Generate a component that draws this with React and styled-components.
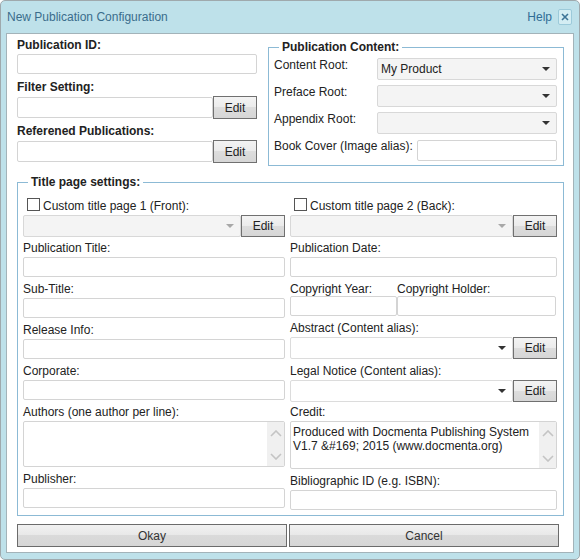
import React from 'react';
import styled, { createGlobalStyle } from 'styled-components';

const GlobalStyle = createGlobalStyle`
  html, body { margin: 0; padding: 0; background: #fff; }
  body { font-family: "Liberation Sans", Arial, sans-serif; font-size: 12px; color: #222; }
  * { box-sizing: border-box; }
`;

const FONT = `12px "Liberation Sans", Arial, sans-serif`;

const Window = styled.div`
  width: 580px;
  height: 560px;
  border: 1px solid #9fa9ad;
  border-radius: 5px;
  background: #bee1ea;
  display: flex;
  flex-direction: column;
`;

const TitleBar = styled.div`
  height: 32px;
  flex: none;
  display: flex;
  align-items: center;
  padding: 0 7px 0 6px;
  color: #3a6d8c;
`;

const Title = styled.div`
  flex: 1;
  line-height: 14px;
`;

const HelpLink = styled.span`
  color: #2f6d96;
  margin-right: 6px;
`;

const CloseButton = styled.div`
  width: 14px;
  height: 16px;
  border: 1px solid #9ccada;
  border-radius: 2px;
  background: #d4edf3;
  display: flex;
  align-items: center;
  justify-content: center;
`;

const Content = styled.div`
  flex: 1;
  margin: 0 5px 6px 5px;
  background: #fff;
  border: 1px solid #a3b3b9;
  padding: 0 9px 0 10px;
  display: flex;
  flex-direction: column;
`;

const TopSection = styled.div`
  display: flex;
  align-items: flex-start;
  gap: 11px;
  padding-top: 4px;
`;

const LeftCol = styled.div`
  width: 240px;
  flex: none;
  display: flex;
  flex-direction: column;
`;

const BoldLabel = styled.div`
  font-weight: bold;
  line-height: 14px;
  height: 14px;
  margin-top: ${p => p.$mt || 0}px;
  margin-bottom: 2px;
  white-space: nowrap;
`;

const TextInput = styled.input`
  display: block;
  flex: ${p => (p.$grow ? '1 1 auto' : 'none')};
  width: ${p => (p.$w ? `${p.$w}px` : '100%')};
  min-width: 0;
  height: ${p => p.$h || 20}px;
  margin: 0;
  margin-top: ${p => p.$mt || 0}px;
  border: 1px solid #d4d4d4;
  border-radius: 2px;
  padding: 0 3px;
  font: ${FONT};
  background: #fff;
  outline: none;
`;

const InputRow = styled.div`
  display: flex;
  align-items: center;
  height: ${p => p.$h || 23}px;
  flex: none;
`;

const EditButton = styled.button`
  flex: none;
  width: 44px;
  height: ${p => p.$h || 23}px;
  margin: 0;
  padding: 0;
  border: 1px solid #707070;
  border-radius: 0;
  background: linear-gradient(#f3f3f3, #ebebeb 50%, #dddddd 50%, #d6d6d6);
  font: ${FONT};
  color: #222;
`;

const Fieldset = styled.fieldset`
  margin: 0;
  margin-top: ${p => p.$mt || 0}px;
  width: ${p => p.$w}px;
  flex: none;
  min-width: 0;
  border: 1px solid #8cbad5;
  padding: ${p => p.$pad};
`;

const Legend = styled.legend`
  font-weight: bold;
  line-height: 14px;
  padding: 0 3px;
  margin-left: 5px;
`;

const CRow = styled.div`
  display: flex;
  align-items: flex-start;
  height: 22px;
  & + & { margin-top: 5px; }
`;

const CLabel = styled.div`
  flex: none;
  width: ${p => p.$w}px;
  line-height: 14px;
  white-space: nowrap;
`;

const SelectBox = styled.div`
  flex: ${p => (p.$w ? 'none' : '1 1 auto')};
  width: ${p => (p.$w ? `${p.$w}px` : 'auto')};
  min-width: 0;
  height: 22px;
  border: 1px solid ${p => (p.$white ? '#dcdcdc' : '#d8d8d8')};
  border-radius: 2px;
  background: ${p => (p.$white ? '#fff' : '#f4f4f4')};
  display: flex;
  align-items: center;
  padding-left: 3px;
  color: #222;
`;

const SelectText = styled.span`
  flex: 1;
  line-height: 14px;
  white-space: nowrap;
`;

const Arrow = styled.span`
  flex: none;
  width: 0;
  height: 0;
  margin-right: 6px;
  border-left: 4px solid transparent;
  border-right: 4px solid transparent;
  border-top: 4px solid ${p => (p.$dim ? '#a8a8a8' : '#333')};
`;

const Columns = styled.div`
  display: grid;
  grid-template-columns: 262px 267px;
  column-gap: 5px;
  align-items: start;
`;

const Col = styled.div`
  display: flex;
  flex-direction: column;
`;

const CheckRow = styled.label`
  display: flex;
  align-items: flex-start;
  height: 17px;
  padding-left: 4px;
`;

const Check = styled.input`
  appearance: none;
  -webkit-appearance: none;
  width: 13px;
  height: 13px;
  margin: 0 3px 0 0;
  border: 1px solid #555;
  background: #fff;
  flex: none;
`;

const CheckText = styled.span`
  line-height: 14px;
  padding-top: 1px;
  white-space: nowrap;
`;

const Field = styled.div`
  display: flex;
  flex-direction: column;
  margin-top: ${p => (p.$mt ?? 5)}px;
  width: ${p => (p.$w ? `${p.$w}px` : 'auto')};
  flex: none;
`;

const Label = styled.div`
  line-height: 14px;
  height: 14px;
  margin-bottom: ${p => (p.$mb ?? 2)}px;
  white-space: nowrap;
`;

const SplitRow = styled.div`
  display: flex;
`;

const TextAreaBox = styled.div`
  display: flex;
  height: ${p => p.$h}px;
  border: 1px solid #d4d4d4;
  border-radius: 2px;
  background: #fff;
  overflow: hidden;
`;

const TextArea = styled.textarea`
  flex: 1;
  min-width: 0;
  border: 0;
  margin: 0;
  resize: none;
  outline: none;
  padding: 3px 2px;
  font: ${FONT};
  line-height: 14px;
  color: #222;
  overflow: hidden;
  background: transparent;
`;

const ScrollTrack = styled.div`
  width: 17px;
  flex: none;
  background: #f0f0f0;
  display: flex;
  flex-direction: column;
  justify-content: space-between;
  align-items: center;
  padding: 8px 0 6px;
`;

const ButtonBar = styled.div`
  display: flex;
  gap: 2px;
  margin-top: 8px;
`;

const DialogButton = styled.button`
  width: 270px;
  height: 23px;
  margin: 0;
  padding: 0;
  border: 1px solid #6b6b6b;
  border-radius: 0;
  background: linear-gradient(#f1f1f1, #e8e8e8 50%, #dadada 50%, #d6d6d6);
  font: ${FONT};
  color: #333;
`;

const Chevron = ({ up }) => (
  <svg width="12" height="7" viewBox="0 0 12 7">
    <path
      d={up ? 'M1 6 L6 1 L11 6' : 'M1 1 L6 6 L11 1'}
      fill="none"
      stroke="#c4c4c4"
      strokeWidth="1.6"
    />
  </svg>
);

const Scroll = () => (
  <ScrollTrack>
    <Chevron up />
    <Chevron />
  </ScrollTrack>
);

const Select = ({ text, dim, white, w }) => (
  <SelectBox $white={white} $w={w}>
    <SelectText>{text}</SelectText>
    <Arrow $dim={dim} />
  </SelectBox>
);

export default function App() {
  return (
    <>
      <GlobalStyle />
      <Window>
        <TitleBar>
          <Title>New Publication Configuration</Title>
          <HelpLink>Help</HelpLink>
          <CloseButton>
            <svg width="8" height="8" viewBox="0 0 8 8">
              <path d="M1 1 L7 7 M7 1 L1 7" stroke="#3d7497" strokeWidth="1.6" />
            </svg>
          </CloseButton>
        </TitleBar>
        <Content>
          <TopSection>
            <LeftCol>
              <BoldLabel>Publication ID:</BoldLabel>
              <TextInput />
              <BoldLabel $mt={6}>Filter Setting:</BoldLabel>
              <InputRow>
                <TextInput $grow $h={21} />
                <EditButton>Edit</EditButton>
              </InputRow>
              <BoldLabel $mt={5}>Referened Publications:</BoldLabel>
              <InputRow>
                <TextInput $grow $h={21} />
                <EditButton>Edit</EditButton>
              </InputRow>
            </LeftCol>
            <Fieldset $w={296} $mt={2} $pad="4px 6px 4px 5px">
              <Legend>Publication Content:</Legend>
              <CRow>
                <CLabel $w={103}>Content Root:</CLabel>
                <Select text="My Product" w={180} />
              </CRow>
              <CRow>
                <CLabel $w={103}>Preface Root:</CLabel>
                <Select w={180} />
              </CRow>
              <CRow>
                <CLabel $w={103}>Appendix Root:</CLabel>
                <Select w={180} />
              </CRow>
              <CRow>
                <CLabel $w={143}>Book Cover (Image alias):</CLabel>
                <TextInput $w={140} $h={21} $mt={1} />
              </CRow>
            </Fieldset>
          </TopSection>

          <Fieldset $w={547} $mt={9} $pad="9px 6px 5px 5px">
            <Legend>Title page settings:</Legend>
            <Columns>
              <Col>
                <CheckRow>
                  <Check type="checkbox" />
                  <CheckText>Custom title page 1 (Front):</CheckText>
                </CheckRow>
                <InputRow $h={22}>
                  <Select dim />
                  <EditButton $h={22}>Edit</EditButton>
                </InputRow>
                <Field $mt={4}>
                  <Label>Publication Title:</Label>
                  <TextInput />
                </Field>
                <Field>
                  <Label>Sub-Title:</Label>
                  <TextInput />
                </Field>
                <Field>
                  <Label>Release Info:</Label>
                  <TextInput />
                </Field>
                <Field>
                  <Label>Corporate:</Label>
                  <TextInput />
                </Field>
                <Field>
                  <Label>Authors (one author per line):</Label>
                  <TextAreaBox $h={46}>
                    <TextArea />
                    <Scroll />
                  </TextAreaBox>
                </Field>
                <Field>
                  <Label>Publisher:</Label>
                  <TextInput />
                </Field>
              </Col>

              <Col>
                <CheckRow>
                  <Check type="checkbox" />
                  <CheckText>Custom title page 2 (Back):</CheckText>
                </CheckRow>
                <InputRow $h={22}>
                  <Select dim />
                  <EditButton $h={22}>Edit</EditButton>
                </InputRow>
                <Field $mt={4}>
                  <Label>Publication Date:</Label>
                  <TextInput />
                </Field>
                <SplitRow>
                  <Field $w={107}>
                    <Label $mb={0}>Copyright Year:</Label>
                    <TextInput />
                  </Field>
                  <Field $w={159}>
                    <Label $mb={0}>Copyright Holder:</Label>
                    <TextInput />
                  </Field>
                </SplitRow>
                <Field>
                  <Label>Abstract (Content alias):</Label>
                  <InputRow $h={22}>
                    <Select white />
                    <EditButton $h={22}>Edit</EditButton>
                  </InputRow>
                </Field>
                <Field>
                  <Label>Legal Notice (Content alias):</Label>
                  <InputRow $h={22}>
                    <Select white />
                    <EditButton $h={22}>Edit</EditButton>
                  </InputRow>
                </Field>
                <Field $mt={3}>
                  <Label>Credit:</Label>
                  <TextAreaBox $h={48}>
                    <TextArea
                      defaultValue={'Produced with Docmenta Publishing System V1.7 &#169; 2015 (www.docmenta.org)'}
                    />
                    <Scroll />
                  </TextAreaBox>
                </Field>
                <Field>
                  <Label>Bibliographic ID (e.g. ISBN):</Label>
                  <TextInput />
                </Field>
              </Col>
            </Columns>
          </Fieldset>

          <ButtonBar>
            <DialogButton>Okay</DialogButton>
            <DialogButton>Cancel</DialogButton>
          </ButtonBar>
        </Content>
      </Window>
    </>
  );
}
